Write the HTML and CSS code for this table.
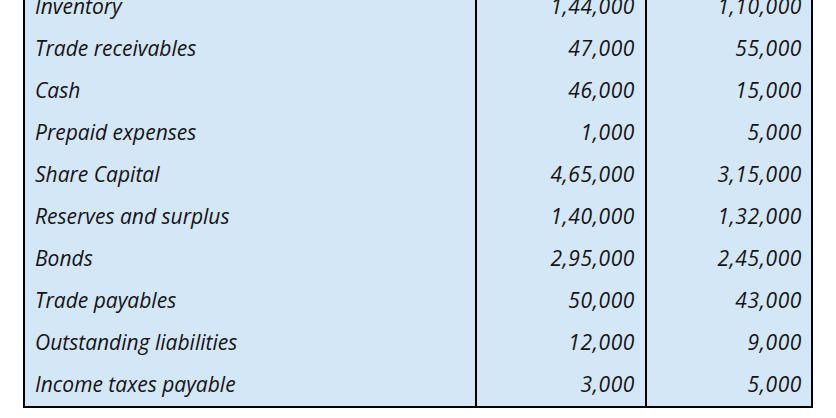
FILE: index.html
```html
<!DOCTYPE html>
<html>
<head>
<meta charset="utf-8">
<link rel="stylesheet" href="styles.css">
</head>
<body>
<table class="sheet">
  <colgroup>
    <col class="c-label">
    <col class="c-num">
    <col class="c-num2">
  </colgroup>
  <tbody>
    <tr><td class="label">Inventory</td><td class="num">1,44,000</td><td class="num last">1,10,000</td></tr>
    <tr><td class="label">Trade receivables</td><td class="num">47,000</td><td class="num last">55,000</td></tr>
    <tr><td class="label">Cash</td><td class="num">46,000</td><td class="num last">15,000</td></tr>
    <tr><td class="label">Prepaid expenses</td><td class="num">1,000</td><td class="num last">5,000</td></tr>
    <tr><td class="label">Share Capital</td><td class="num">4,65,000</td><td class="num last">3,15,000</td></tr>
    <tr><td class="label">Reserves and surplus</td><td class="num">1,40,000</td><td class="num last">1,32,000</td></tr>
    <tr><td class="label">Bonds</td><td class="num">2,95,000</td><td class="num last">2,45,000</td></tr>
    <tr><td class="label">Trade payables</td><td class="num">50,000</td><td class="num last">43,000</td></tr>
    <tr><td class="label">Outstanding liabilities</td><td class="num">12,000</td><td class="num last">9,000</td></tr>
    <tr><td class="label">Income taxes payable</td><td class="num">3,000</td><td class="num last">5,000</td></tr>
  </tbody>
</table>
</body>
</html>
```
FILE: styles.css
```css
html, body {
  margin: 0;
  padding: 0;
  background: #ffffff;
}
body {
  overflow: hidden;
}
.sheet {
  margin: -14px 0 0 23px;
  width: 790px;
  table-layout: fixed;
  border-collapse: separate;
  border-spacing: 0;
  background: #d4e7f6;
  border-left: 2px solid #000;
  border-right: 2px solid #000;
  border-bottom: 2px solid #000;
  font-family: "Open Sans", "Noto Sans", sans-serif;
  font-style: italic;
  font-size: 21px;
  color: #141418;
}
.c-label { width: 452px; }
.c-num { width: 170px; }
.c-num2 { width: 164px; }
.sheet td {
  height: 40px;
  padding: 0 0 2px 0;
  vertical-align: middle;
  white-space: nowrap;
  line-height: 24px;
}
.label {
  padding-left: 10px !important;
  border-right: 2px solid #000;
}
.num {
  text-align: right;
  padding-right: 10px !important;
  border-right: 2px solid #000;
  letter-spacing: 0.6px;
}
.num.last {
  border-right: none;
  padding-right: 9px !important;
}
```
